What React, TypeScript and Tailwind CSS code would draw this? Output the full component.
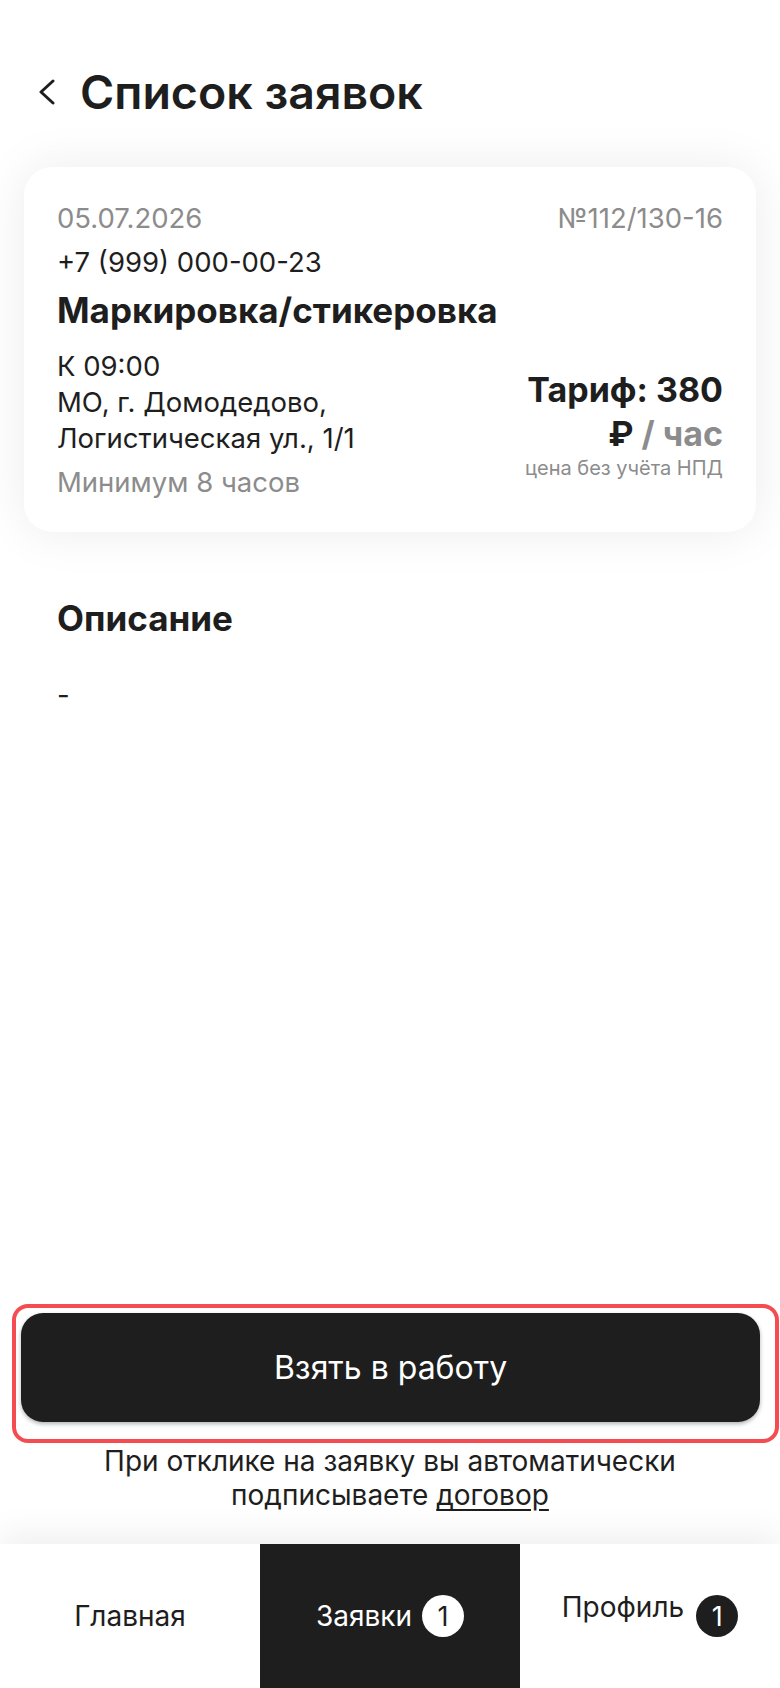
import React from "react";

const dark = "text-[#1e1e1e]";

function BackChevron() {
  return (
    <svg width="18" height="26" viewBox="0 0 18 26" fill="none" aria-hidden>
      <path d="M15 2 L3 13 L15 24" stroke="#1e1e1e" strokeWidth="3" strokeLinecap="round" strokeLinejoin="round" />
    </svg>
  );
}

function OrderCard() {
  return (
    <div className="mx-[24px] mt-[47px] rounded-[28px] bg-white px-[33px] pt-[33px] pb-[32px] shadow-[0_0_50px_rgba(0,0,0,0.08)]">
      <div className="flex justify-between text-[27.5px] leading-[36px] text-[#8c8c8c]">
        <span>05.07.2026</span>
        <span>№112/130-16</span>
      </div>
      <div className={`mt-[8px] text-[27.5px] leading-[36px] ${dark}`}>+7 (999) 000-00-23</div>
      <div className={`mt-[10px] text-[35px] font-bold leading-[40px] ${dark}`}>Маркировка/стикеровка</div>
      <div className="mt-[18px] flex items-center justify-between">
        <div className={`text-[27.5px] leading-[36px] ${dark}`}>
          <div>К 09:00</div>
          <div>МО, г. Домодедово,</div>
          <div>Логистическая ул., 1/1</div>
          <div className="mt-[8px] text-[#8c8c8c]">Минимум 8 часов</div>
        </div>
        <div className="text-right">
          <div className={`text-[34px] font-bold leading-[44px] ${dark}`}>Тариф: 380</div>
          <div className="text-[34px] font-bold leading-[44px]">
            <span className={dark}>₽</span> <span className="text-[#8c8c8c]">/ час</span>
          </div>
          <div className="text-[20px] leading-[24px] text-[#8c8c8c]">цена без учёта НПД</div>
        </div>
      </div>
    </div>
  );
}

function Badge({ inverted }: { inverted?: boolean }) {
  return (
    <span
      className={`flex h-[42px] w-[42px] items-center justify-center rounded-full text-[27px] leading-none ${
        inverted ? "bg-white text-[#1e1e1e]" : "bg-[#1e1e1e] text-white"
      }`}
    >
      1
    </span>
  );
}

export default function App() {
  return (
    <div
      className="flex min-h-[1688px] w-[780px] flex-col bg-white"
      style={{ fontFamily: "Inter, 'Noto Sans', sans-serif" }}
    >
      <header className="flex items-center gap-[24px] pl-[38px] pt-[64px]">
        <BackChevron />
        <h1 className={`text-[46.5px] font-semibold leading-[56px] ${dark}`}>Список заявок</h1>
      </header>

      <OrderCard />

      <section className="mt-[66px] px-[57px]">
        <h2 className={`text-[35px] font-bold leading-[40px] ${dark}`}>Описание</h2>
        <p className={`mt-[39px] text-[27.5px] leading-[36px] ${dark}`}>-</p>
      </section>

      <div className="flex-1" />

      <div className="pl-[12px] pr-[1px]">
        <div className="rounded-[16px] border-[4px] border-[#f54c52] pt-[5px] pl-[5px] pr-[15px] pb-[17px]">
          <button className="flex h-[109px] w-full items-center justify-center rounded-[22px] bg-[#1e1e1e] text-[32px] text-white shadow-[0_2px_4px_rgba(0,0,0,0.3)]">
            Взять в работу
          </button>
        </div>
      </div>
      <p className={`mt-[1px] text-center text-[28px] leading-[34px] ${dark}`}>
        При отклике на заявку вы автоматически
        <br />
        подписываете <span className="underline underline-offset-[4px]">договор</span>
      </p>

      <nav className="mt-[32px] grid h-[144px] grid-cols-3 bg-white shadow-[0_-12px_30px_rgba(0,0,0,0.06)]">
        <div className={`flex items-center justify-center text-[28px] ${dark}`}>Главная</div>
        <div className="flex items-center justify-center gap-[10px] bg-[#1e1e1e] text-[28px] text-white">
          <span>Заявки</span>
          <Badge inverted />
        </div>
        <div className={`flex items-center justify-center gap-[12px] text-[28px] ${dark}`}>
          <span className="mb-[18px] leading-none">Профиль</span>
          <Badge />
        </div>
      </nav>
    </div>
  );
}
